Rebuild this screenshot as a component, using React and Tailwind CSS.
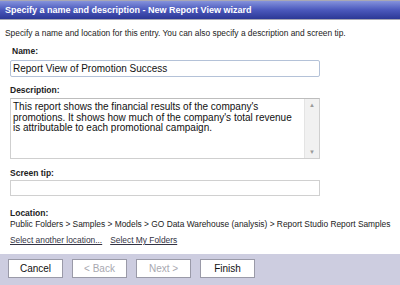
import React from "react";

const font = { fontFamily: '"Liberation Sans", Arial, sans-serif' };

const Label = ({ children, className = "" }) => (
  <div className={`h-[12px] leading-[12px] text-[8.5px] font-bold text-[#222] ${className}`}>
    {children}
  </div>
);

const Button = ({ children, disabled }) => (
  <button
    className={`w-[55px] h-[19px] bg-white border border-[#9a9aa8] text-[10px] leading-[17px] ${
      disabled ? "text-[#a8a8b0]" : "text-[#111]"
    }`}
  >
    {children}
  </button>
);

export default function App() {
  return (
    <div className="w-[400px] h-[285px] bg-white flex flex-col overflow-hidden" style={font}>
      {/* Title bar */}
      <div className="h-[20px] border-t border-b border-[#a8a8b4] bg-gradient-to-b from-[#8592dc] via-[#4b58bc] to-[#2c3896] flex items-center pl-[5px]">
        <span className="text-white font-bold text-[9px] leading-none">
          Specify a name and description - New Report View wizard
        </span>
      </div>

      <div className="mt-[7px] h-[12px] leading-[12px] pl-[5px] text-[8.4px] text-[#222]">
        Specify a name and location for this entry. You can also specify a description and screen tip.
      </div>

      <div className="flex-1 px-[10px] flex flex-col">
        <Label className="mt-[6px] pl-[2px]">Name:</Label>
        <div className="mt-[3px] w-[310px] h-[17px] border border-[#b4c2d8] rounded-[2px] flex items-center pl-[2px] text-[10px] text-[#111]">
          Report View of Promotion Success
        </div>

        <Label className="mt-[7px]">Description:</Label>
        <div className="mt-[2px] w-[310px] h-[61px] border border-[#cfcfcf] border-t-[#bdbdbd] flex">
          <div className="flex-1 pl-[2px] pt-[3px] text-[10px] leading-[10.5px] text-[#111]">
            <div className="whitespace-nowrap">This report shows the financial results of the company's</div>
            <div className="whitespace-nowrap">promotions. It shows how much of the company's total revenue</div>
            <div className="whitespace-nowrap">is attributable to each promotional campaign.</div>
          </div>
          <div className="w-[15px] bg-[#f1f1f1] border-l border-[#e4e4e4] flex flex-col justify-between items-center py-[3px] text-[6px] text-[#9a9a9a] leading-none">
            <span>▲</span>
            <span>▼</span>
          </div>
        </div>

        <Label className="mt-[8px]">Screen tip:</Label>
        <div className="mt-[1px] w-[310px] h-[16px] border border-[#d0d0d0]"></div>

        <Label className="mt-[11px] h-[10px] leading-[10px]">Location:</Label>
        <div className="h-[10px] leading-[10px] text-[8.4px] text-[#222] whitespace-nowrap">
          Public Folders &gt; Samples &gt; Models &gt; GO Data Warehouse (analysis) &gt; Report Studio Report Samples
        </div>
        <div className="mt-[6px] h-[10px] leading-[10px] text-[8.4px] text-[#333344] flex gap-[8px]">
          <span className="underline">Select another location...</span>
          <span className="underline">Select My Folders</span>
        </div>
      </div>

      {/* Footer */}
      <div className="h-[31px] bg-[#cdcde0] flex items-start pt-[5px] pl-[8px] gap-[9px]">
        <Button>Cancel</Button>
        <Button disabled>&lt; Back</Button>
        <Button disabled>Next &gt;</Button>
        <Button>Finish</Button>
      </div>
    </div>
  );
}
